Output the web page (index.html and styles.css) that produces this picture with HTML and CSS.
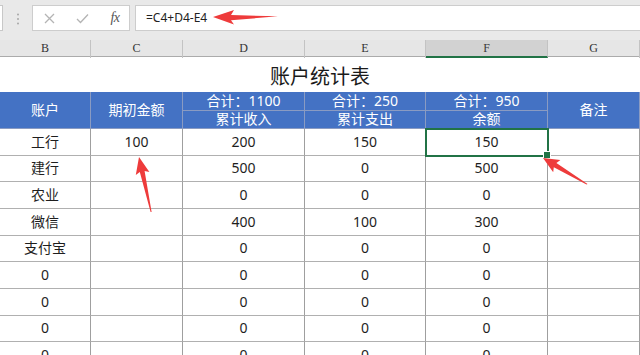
FILE: index.html
```html
<!DOCTYPE html>
<html lang="zh">
<head>
<meta charset="utf-8">
<title>账户统计表</title>
<link rel="stylesheet" href="styles.css">
</head>
<body>
<div class="app">
  <div class="toolbar">
    <div class="namebox"></div>
    <div class="grip">
      <svg width="4" height="12" viewBox="0 0 4 12"><circle cx="2" cy="1.5" r="1" fill="#a8a8a8"/><circle cx="2" cy="6" r="1" fill="#a8a8a8"/><circle cx="2" cy="10.5" r="1" fill="#a8a8a8"/></svg>
    </div>
    <div class="fxbtns">
      <span class="btn"><svg width="11" height="11" viewBox="0 0 11 11"><path d="M1 1 L10 10 M10 1 L1 10" stroke="#b4b4b4" stroke-width="1.3" fill="none"/></svg></span>
      <span class="btn"><svg width="13" height="11" viewBox="0 0 13 11"><path d="M1 6 L4.5 9.5 L12 1.5" stroke="#b4b4b4" stroke-width="1.3" fill="none"/></svg></span>
      <span class="btn fx">fx</span>
    </div>
    <div class="formula">=C4+D4-E4</div>
  </div>

  <div class="colheads">
    <div class="ch">B</div>
    <div class="ch">C</div>
    <div class="ch">D</div>
    <div class="ch">E</div>
    <div class="ch active">F</div>
    <div class="ch">G</div>
  </div>

  <div class="sheet">
    <div class="title">账户统计表</div>

    <div class="hd span2">账户</div>
    <div class="hd span2">期初金额</div>
    <div class="hd">合计：1100</div>
    <div class="hd">合计：250</div>
    <div class="hd">合计：950</div>
    <div class="hd span2">备注</div>
    <div class="hd hd2">累计收入</div>
    <div class="hd hd2">累计支出</div>
    <div class="hd hd2">余额</div>

    <div class="c">工行</div><div class="c">100</div><div class="c">200</div><div class="c">150</div><div class="c sel">150</div><div class="c"></div>
    <div class="c">建行</div><div class="c"></div><div class="c">500</div><div class="c">0</div><div class="c">500</div><div class="c"></div>
    <div class="c">农业</div><div class="c"></div><div class="c">0</div><div class="c">0</div><div class="c">0</div><div class="c"></div>
    <div class="c">微信</div><div class="c"></div><div class="c">400</div><div class="c">100</div><div class="c">300</div><div class="c"></div>
    <div class="c">支付宝</div><div class="c"></div><div class="c">0</div><div class="c">0</div><div class="c">0</div><div class="c"></div>
    <div class="c">0</div><div class="c"></div><div class="c">0</div><div class="c">0</div><div class="c">0</div><div class="c"></div>
    <div class="c">0</div><div class="c"></div><div class="c">0</div><div class="c">0</div><div class="c">0</div><div class="c"></div>
    <div class="c">0</div><div class="c"></div><div class="c">0</div><div class="c">0</div><div class="c">0</div><div class="c"></div>
    <div class="c">0</div><div class="c"></div><div class="c">0</div><div class="c">0</div><div class="c">0</div><div class="c"></div>
  </div>

  <svg class="arrows" width="640" height="355" viewBox="0 0 640 355">
    <polygon fill="#ee3b3b" points="213,17 234,10 231,15 278,16.3 231,20.3 234,24.5"/>
    <polygon fill="#ee3b3b" points="139,157 149.4,172.1 144.6,171.1 151.6,212 150.6,212 139.8,172.1 135.8,175.1"/>
    <polygon fill="#ee3b3b" points="543,158 560.4,160.1 556.4,163 587.5,184 586.5,184.6 553.8,167.3 553.2,172.2"/>
  </svg>
</div>
</body>
</html>
```

FILE: styles.css
```css
* { box-sizing: border-box; }

html, body {
  margin: 0;
  padding: 0;
  background: #ffffff;
}

.app {
  position: relative;
  width: 640px;
  height: 355px;
  overflow: hidden;
  font-family: "Noto Sans", "Noto Sans CJK SC", sans-serif;
  color: #222222;
}

/* formula bar */
.toolbar {
  height: 40px;
  background: #e9e9e9;
  display: flex;
  align-items: flex-start;
  padding-top: 5px;
}

.namebox {
  width: 3px;
  height: 26px;
  background: #ffffff;
  border: 1px solid #c8c8c8;
  border-left: none;
}

.grip {
  width: 29px;
  height: 26px;
  display: flex;
  align-items: center;
  justify-content: center;
  padding-top: 1px;
}

.fxbtns {
  width: 98px;
  height: 26px;
  background: #ffffff;
  border: 1px solid #cdcdcd;
  display: grid;
  grid-template-columns: 33px 33px 32px;
  align-items: center;
  justify-items: center;
}

.btn {
  display: flex;
  align-items: center;
  justify-content: center;
  height: 24px;
}

.fx {
  font-family: "Liberation Serif", "DejaVu Serif", serif;
  font-style: italic;
  font-size: 14px;
  color: #555555;
  letter-spacing: -0.5px;
}

.formula {
  flex: 1;
  margin-left: 5px;
  height: 26px;
  background: #ffffff;
  border: 1px solid #cdcdcd;
  border-right: none;
  padding-left: 10px;
  font-size: 12px;
  line-height: 24px;
  color: #222222;
}

/* column letters */
.colheads {
  display: grid;
  grid-template-columns: 91px 92px 122px 121px 122px 92px;
  height: 17px;
  background: #e6e6e6;
  border-bottom: 1px solid #ababab;
}

.ch {
  border-right: 1px solid #c3c3c3;
  text-align: center;
  font-family: "Liberation Serif", "DejaVu Serif", serif;
  font-size: 12px;
  line-height: 17px;
  color: #333333;
}

.ch.active {
  background: #d2d2d2;
  border-bottom: 2px solid #217346;
  color: #3a3a3a;
  line-height: 16px;
}

/* sheet */
.sheet {
  display: grid;
  grid-template-columns: 91px 92px 122px 121px 122px 92px;
  grid-template-rows: 35px 19px 18px repeat(9, 26.67px);
}

.title {
  grid-column: 1 / 7;
  display: flex;
  align-items: center;
  justify-content: center;
  font-size: 20px;
  color: #1a1a1a;
  padding-top: 1px;
}

.hd {
  background: #4472c4;
  color: #ffffff;
  font-size: 14px;
  display: flex;
  align-items: center;
  justify-content: center;
  border-right: 1px solid #8a9bc2;
  border-bottom: 1px solid #8a9bc2;
  line-height: 1;
}

.hd.span2 {
  grid-row: span 2;
}

.hd.hd2 {
  padding-bottom: 1px;
}

.c {
  border-right: 1px solid #9f9f9f;
  border-bottom: 1px solid #b0b0b0;
  display: flex;
  align-items: center;
  justify-content: center;
  font-size: 14px;
  line-height: 1;
  color: #1e1e1e;
}

.sel {
  position: relative;
  outline: 2px solid #217346;
  outline-offset: -1px;
  z-index: 1;
}

.sel::after {
  content: "";
  position: absolute;
  right: -4px;
  bottom: -4px;
  width: 6px;
  height: 6px;
  background: #217346;
  border: 1px solid #ffffff;
}

.arrows {
  position: absolute;
  left: 0;
  top: 0;
  pointer-events: none;
  z-index: 5;
}
```
